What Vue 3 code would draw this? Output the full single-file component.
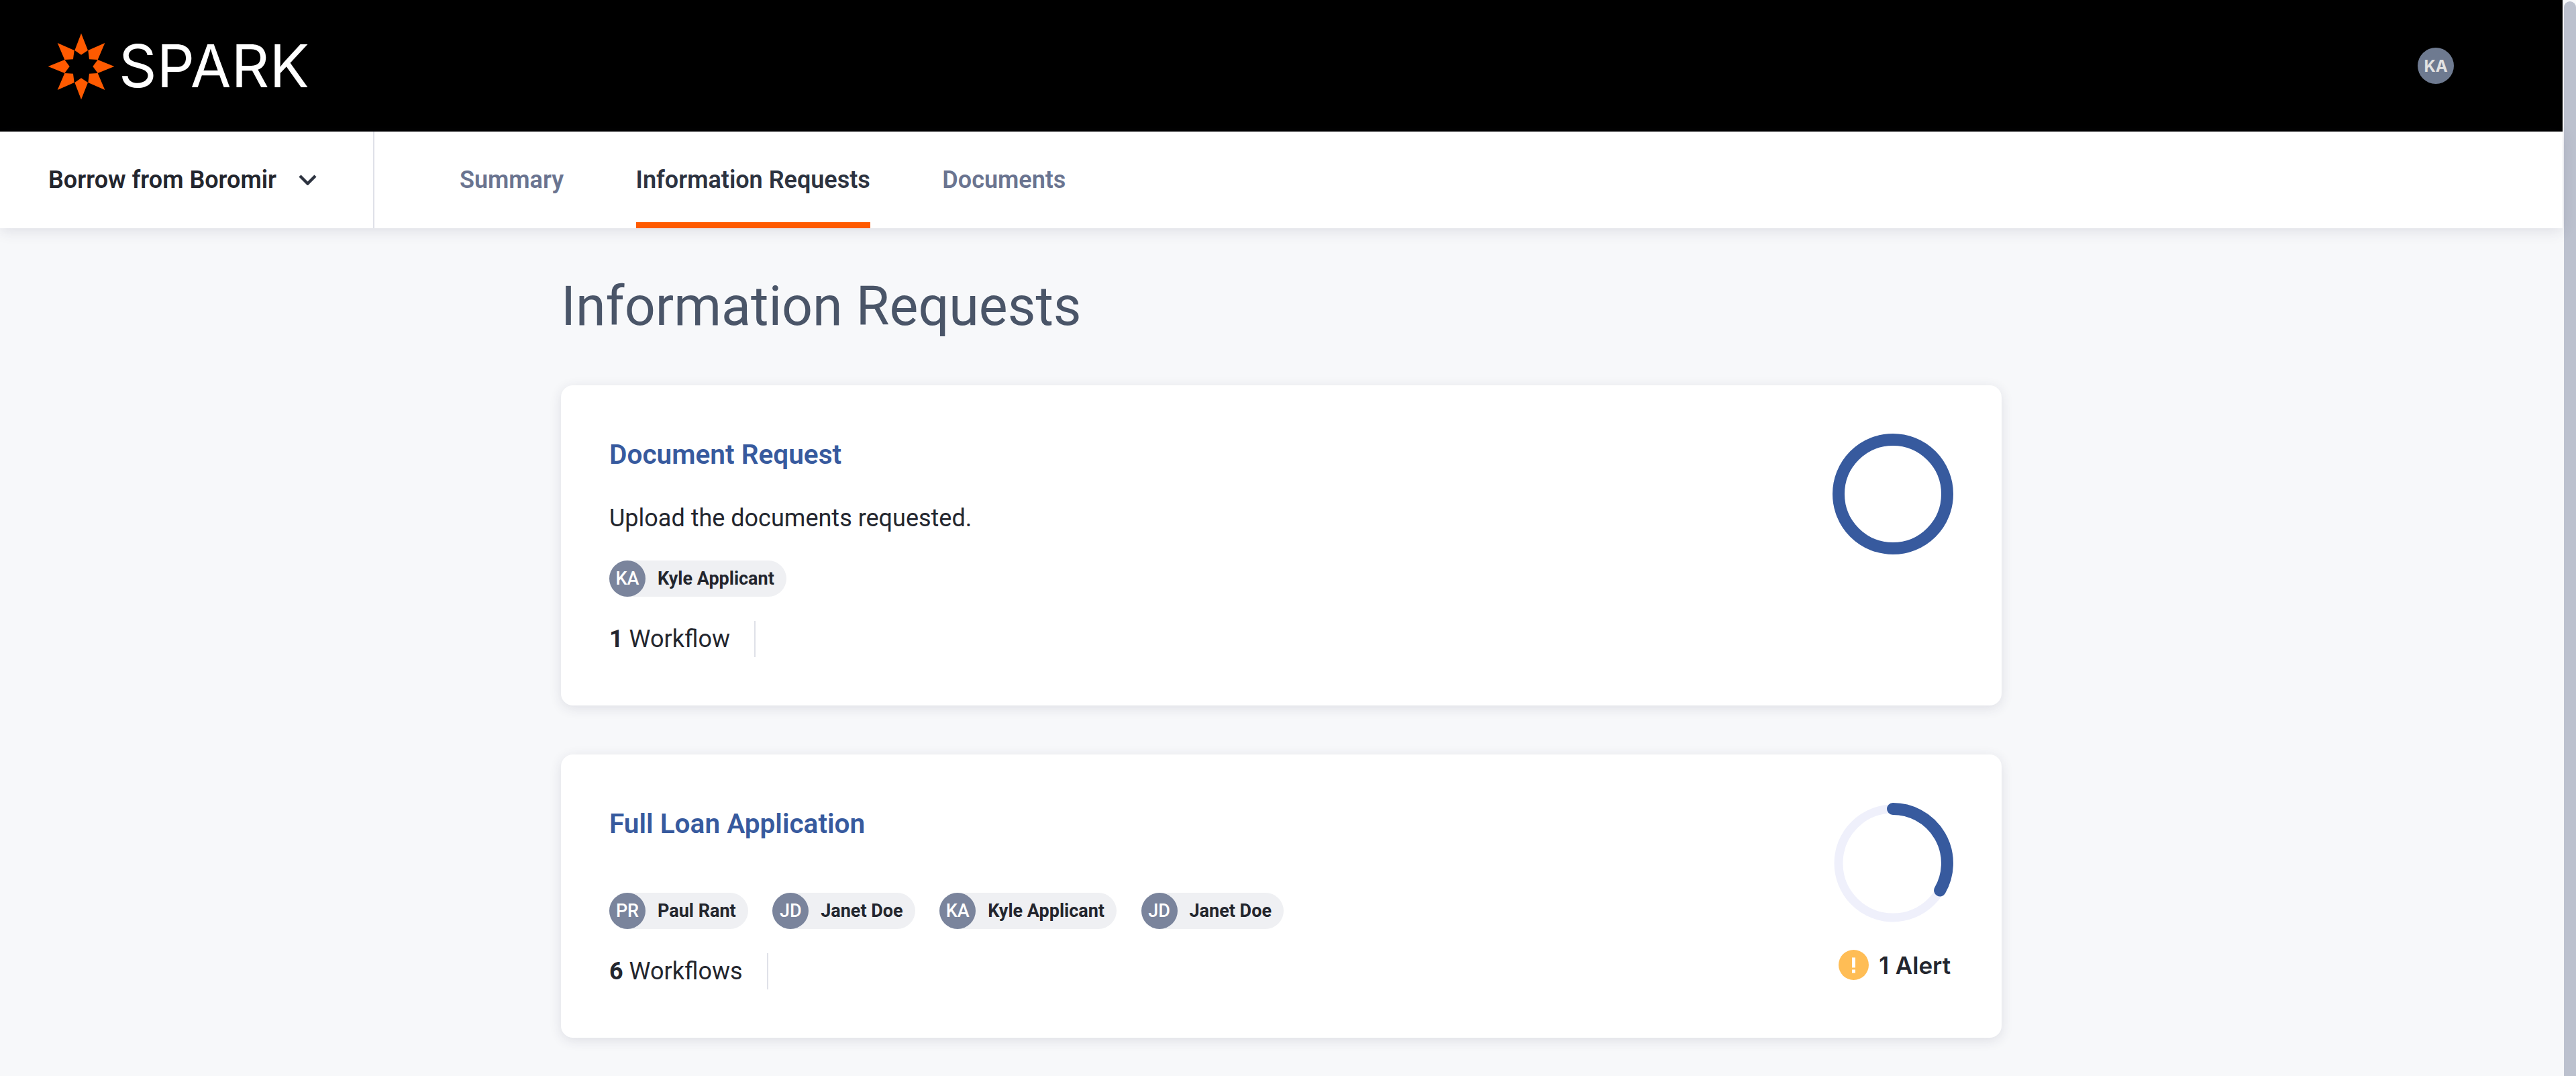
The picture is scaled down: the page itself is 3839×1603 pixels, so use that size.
<script setup>
const star = [
  '0,-148 30,-72 0,-52 -29,-72',
  '106,-105 74,-30 36,-32 31,-72',
  '148,0 74,30 52,0 74,-30',
  '106,105 31,72 36,32 74,30',
  '0,148 -29,72 0,52 30,72',
  '-106,105 -74,30 -36,32 -31,72',
  '-148,0 -74,-30 -52,0 -74,30',
  '-106,-105 -31,-72 -36,-32 -74,-30'
]
const tabs = [
  { label: 'Summary', active: false },
  { label: 'Information Requests', active: true },
  { label: 'Documents', active: false }
]
const chips2 = [
  { i: 'PR', n: 'Paul Rant' },
  { i: 'JD', n: 'Janet Doe' },
  { i: 'KA', n: 'Kyle Applicant' },
  { i: 'JD', n: 'Janet Doe' }
]
</script>

<template>
  <div class="shell">
    <div class="page">
      <header class="topbar">
        <div class="brand">
          <svg class="star" viewBox="-150 -150 300 300" width="100" height="100" aria-hidden="true">
            <polygon v-for="(p, i) in star" :key="i" :points="p" fill="#ff5a00" />
          </svg>
          <span class="wordmark">SPARK</span>
        </div>
        <span class="avatar avatar-top">KA</span>
      </header>

      <nav class="subnav">
        <div class="project">
          <span class="project-name">Borrow from Boromir</span>
          <svg class="chevron" viewBox="0 0 27 16" width="27" height="16" aria-hidden="true">
            <path d="M2 2 L13.5 13.5 L25 2" fill="none" stroke="#2d3340" stroke-width="4.4" />
          </svg>
        </div>
        <div class="tabs">
          <a v-for="t in tabs" :key="t.label" class="tab" :class="{ active: t.active }">{{ t.label }}</a>
        </div>
      </nav>

      <main class="main">
        <h1 class="heading">Information Requests</h1>

        <section class="card">
          <div class="card-body">
            <h2 class="card-title">Document Request</h2>
            <p class="card-desc">Upload the documents requested.</p>
            <div class="chips">
              <span class="chip"><span class="avatar avatar-chip">KA</span><span class="chip-name">Kyle Applicant</span></span>
            </div>
            <div class="meta"><span class="meta-text"><b>1</b> Workflow</span></div>
          </div>
          <div class="card-side">
            <svg class="ring" viewBox="0 0 180 180" width="180" height="180" aria-hidden="true">
              <circle cx="90" cy="90" r="81" fill="none" stroke="#375a9e" stroke-width="18" />
            </svg>
          </div>
        </section>

        <section class="card">
          <div class="card-body">
            <h2 class="card-title title-only">Full Loan Application</h2>
            <div class="chips">
              <span v-for="(c, i) in chips2" :key="i" class="chip"><span class="avatar avatar-chip">{{ c.i }}</span><span class="chip-name">{{ c.n }}</span></span>
            </div>
            <div class="meta"><span class="meta-text"><b>6</b> Workflows</span></div>
          </div>
          <div class="card-side">
            <svg class="ring" viewBox="0 0 180 180" width="180" height="180" aria-hidden="true">
              <circle cx="90" cy="90" r="81" fill="none" stroke="#eff0fb" stroke-width="13" />
              <path d="M90 9 A81 81 0 0 1 160.1 130.5" fill="none" stroke="#375a9e" stroke-width="18" stroke-linecap="round" />
            </svg>
            <div class="alert">
              <span class="alert-icon">
                <svg viewBox="0 0 45 45" width="45" height="45" aria-hidden="true">
                  <circle cx="22.5" cy="22.5" r="22.5" fill="#ffbd55" />
                  <rect x="20" y="11.5" width="5" height="15" fill="#fff" />
                  <rect x="20" y="29.5" width="5" height="5" fill="#fff" />
                </svg>
              </span>
              <span class="alert-text">1 Alert</span>
            </div>
          </div>
        </section>
      </main>
    </div>
    <div class="scrollbar"><div class="thumb"></div></div>
  </div>
</template>

<style>
html, body { margin: 0; padding: 0; overflow: hidden; background: #f7f8fa; }
</style>

<style scoped>
.shell {
  display: flex;
  width: 3839px;
  height: 1603px;
  overflow: hidden;
  background: #f7f8fa;
  font-family: Roboto, "Liberation Sans", sans-serif;
  color: #23262e;
}
.page { width: 3819px; flex: none; display: flex; flex-direction: column; }
.scrollbar { width: 20px; flex: none; padding: 2px 0 0 2px; box-sizing: border-box; }
.thumb { height: 100%; background: #bcc1ce; border-radius: 9px 9px 0 0; }

.topbar {
  height: 196px; flex: none; background: #000;
  display: flex; align-items: center; justify-content: space-between;
  padding: 0 162px 0 71px;
}
.brand { display: flex; align-items: center; gap: 6px; }
.star { display: block; margin-top: 2px; }
.wordmark {
  font-family: Inter, sans-serif; font-weight: 400; font-size: 88px; line-height: 100px;
  letter-spacing: 0.3px; color: #fff;
}
.avatar {
  display: inline-flex; align-items: center; justify-content: center;
  border-radius: 50%; background: #6e7a90; color: #fff; flex: none;
}
.avatar-top { width: 54px; height: 54px; font-size: 24px; font-weight: 700; color: #e2e2e2; font-family: Inter, sans-serif; }
.avatar-chip { width: 54px; height: 54px; font-size: 27px; font-weight: 500; background: #7a849c; }

.subnav {
  height: 144px; flex: none; background: #fff; display: flex; align-items: stretch;
  box-shadow: 0 4px 20px rgba(40, 45, 70, 0.12); position: relative;
}
.project {
  width: 558px; flex: none; box-sizing: border-box; padding-left: 72px;
  border-right: 2px solid #dfe1e8; display: flex; align-items: center; gap: 33px;
}
.project-name { font-size: 36px; font-weight: 600; color: #23262e; white-space: nowrap; }
.tabs { display: flex; gap: 107.5px; margin-left: 127px; }
.tab {
  display: flex; align-items: center; font-size: 36px; font-weight: 600; color: #6a7490;
  border-bottom: 9px solid transparent; border-top: 9px solid transparent;
}
.tab.active { color: #2d3340; border-bottom-color: #ff5a00; }

.main { width: 2147px; margin: 0 auto; }
.heading {
  margin: 0; padding-top: 68px; height: 166px; box-sizing: border-box;
  font-size: 80.8px; line-height: 98px; font-weight: 400; color: #4a5568;
}
.card {
  display: flex; justify-content: space-between; align-items: flex-start;
  background: #fff; border-radius: 18px; padding: 72px;
  box-shadow: 0 4px 18px rgba(40, 45, 70, 0.12); margin-top: 68px; box-sizing: border-box;
}
.card + .card { margin-top: 73px; }
.card-title { margin: 0 0 36px; font-size: 40.6px; line-height: 63px; font-weight: 600; color: #375a9e; }
.card-desc { margin: 0 0 36px; font-size: 36px; line-height: 54px; font-weight: 400; color: #23262e; }
.title-only { margin-bottom: 71px; }
.chips { display: flex; gap: 36.5px; }
.chip {
  display: inline-flex; align-items: center; height: 54px; background: #eff0f3;
  border-radius: 27px; padding-right: 18px;
}
.chip-name { margin-left: 18px; font-size: 27px; font-weight: 700; color: #23262e; }
.meta { margin-top: 36px; height: 54px; display: flex; align-items: center; }
.meta-text {
  height: 54px; display: flex; align-items: center; white-space: pre; padding-right: 36px;
  border-right: 2px solid #dfe1e8; font-size: 36px; font-weight: 400;
}
.meta-text b { font-weight: 700; }
.card-side { width: 180px; flex: none; }
.ring { display: block; }
.alert { display: flex; align-items: center; justify-content: flex-end; margin-top: 39px; gap: 15px; white-space: nowrap; margin-right: 4px; }
.alert-icon { display: block; width: 45px; height: 45px; flex: none; }
.alert-icon svg { display: block; }
.alert-text { font-family: Inter, sans-serif; font-size: 35px; font-weight: 600; color: #23262e; word-spacing: 1px; }
</style>
